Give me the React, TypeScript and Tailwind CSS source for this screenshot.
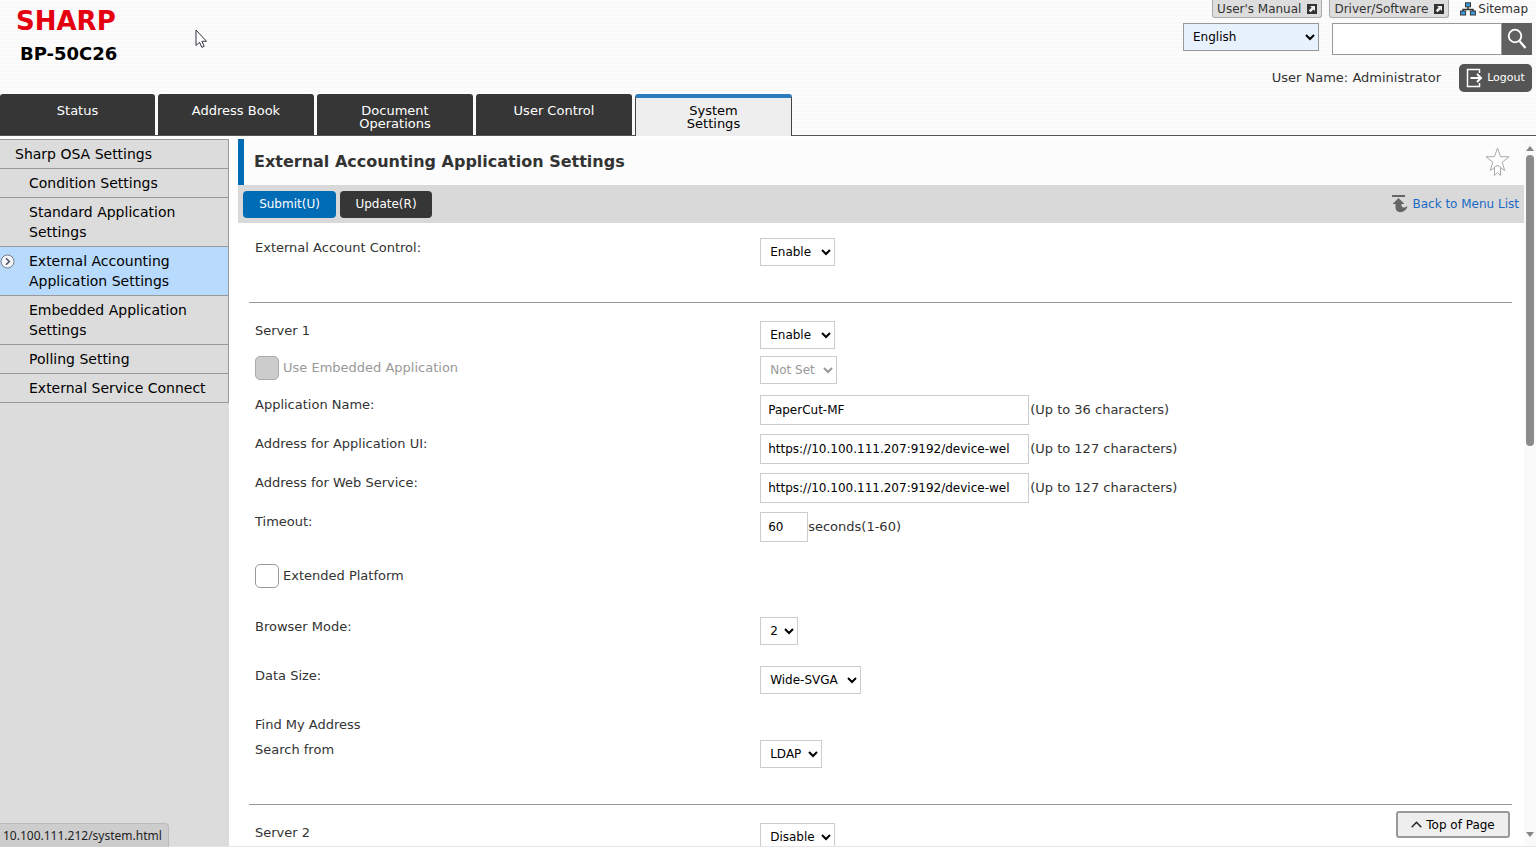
import type { ReactNode } from "react";

interface SelectProps {
  id: string;
  options: string[];
  label?: string;
  disabled?: boolean;
  className?: string;
}

interface RowProps {
  label: string;
  htmlFor?: string;
  className?: string;
  children?: ReactNode;
}

const tabs = ["Status", "Address Book", "Document Operations", "User Control", "System Settings"];

const menuItems = [
  "Condition Settings",
  "Standard Application Settings",
  "External Accounting Application Settings",
  "Embedded Application Settings",
  "Polling Setting",
  "External Service Connect",
];

const activeTab = "System Settings";
const activeItem = "External Accounting Application Settings";

function Select({ id, options, label, disabled, className = "border-[#ccc] bg-white" }: SelectProps) {
  return (
    <select
      id={id}
      aria-label={label}
      disabled={disabled}
      className={`h-7 border pl-[5px] text-xs text-black disabled:text-[#999] disabled:opacity-100 ${className}`}
    >
      {options.map((option) => (
        <option key={option}>{option}</option>
      ))}
    </select>
  );
}

function Row({ label, htmlFor, className = "", children }: RowProps) {
  return (
    <div className={`flex items-start ${className}`}>
      <div className="w-2/5 shrink-0 pl-1.5 leading-5">
        {htmlFor ? <label htmlFor={htmlFor}>{label}</label> : <span>{label}</span>}
      </div>
      <div className="flex items-center pl-1.5">{children}</div>
    </div>
  );
}

function TextField({ id, value, hint, className }: { id: string; value: string; hint: string; className: string }) {
  return (
    <>
      <input
        id={id}
        type="text"
        defaultValue={value}
        className={`h-[30px] border border-[#ccc] bg-white px-[7px] text-xs text-black ${className}`}
      />
      <span>{hint}</span>
    </>
  );
}

function ExternalIcon() {
  return (
    <svg width="10" height="10" viewBox="0 0 10 10" aria-hidden="true">
      <rect width="10" height="10" fill="#333" />
      <path d="M3 2h5v5L6.4 5.4 3.6 8.2 1.8 6.4 4.6 3.6z" fill="#eee" />
    </svg>
  );
}

function SitemapIcon() {
  return (
    <svg width="16" height="14" viewBox="0 0 16 14" aria-hidden="true">
      <path d="M8 5v3M3 10V7.500h10V10" fill="none" stroke="#333" strokeWidth="1.500" />
      <g fill="#3d9be0" stroke="#333">
        <rect x="5.500" y=".8" width="5" height="4" />
        <rect x=".6" y="9" width="5" height="4" />
        <rect x="10.400" y="9" width="5" height="4" />
      </g>
    </svg>
  );
}

function Header() {
  return (
    <header className="flex h-[94px] shrink-0 justify-between">
      <div className="pt-2 pl-4">
        <p className="text-[26px] leading-[26px] font-bold text-[#e5000f]">SHARP</p>
        <h1 className="pt-2 pl-1 text-lg leading-6 font-bold text-black">BP-50C26</h1>
      </div>
      <div className="flex flex-col items-end pr-1">
        <div className="flex h-[18px] items-stretch gap-[7px] pr-1 text-xs">
          {["User's Manual", "Driver/Software"].map((name) => (
            <button
              key={name}
              type="button"
              className="flex items-center gap-1.5 rounded-b-[3px] border border-t-0 border-[#aaa] bg-[#ddd] px-1"
            >
              {name}
              <ExternalIcon />
            </button>
          ))}
          <a href="#sitemap" className="flex items-center gap-0.5 pl-1">
            <SitemapIcon />
            Sitemap
          </a>
        </div>
        <div className="flex items-start gap-[13px] pt-[5px]">
          <Select
            id="language"
            label="Language"
            options={["English"]}
            className="w-[136px] border-[#999] bg-[#e8f1fe]"
          />
          <form className="flex h-8 w-[200px]">
            <input type="search" aria-label="Search" className="min-w-0 flex-1 border border-[#999] bg-white px-2 text-xs" />
            <button type="button" aria-label="Search" className="flex w-[30px] items-center justify-center bg-[#606060]">
              <svg width="20" height="22" viewBox="0 0 20 22" fill="none" stroke="#fff" aria-hidden="true">
                <circle cx="8" cy="8" r="6.300" strokeWidth="1.800" />
                <path d="M12.500 13l6 7" strokeWidth="2.200" />
              </svg>
            </button>
          </form>
        </div>
        <div className="flex items-center gap-[18px] pt-[9px]">
          <span>User Name: Administrator</span>
          <button
            type="button"
            className="flex h-[28px] w-[73px] items-center justify-center gap-1 rounded-[5px] bg-[#555] text-[11px] text-white"
          >
            <svg width="17" height="20" viewBox="0 0 17 20" fill="none" stroke="#fff" strokeWidth="1.500" aria-hidden="true">
              <path d="M13.500 5V1.500H1.500v17h12V15" />
              <path d="M4.500 10h10M11 6l4 4-4 4" strokeWidth="2" />
            </svg>
            Logout
          </button>
        </div>
      </div>
    </header>
  );
}

function Tabs() {
  return (
    <nav className="flex h-[42px] shrink-0 gap-[3px] border-b border-[#555]">
      {tabs.map((tab) => (
        <a
          key={tab}
          href="#tab"
          className={
            tab === activeTab
              ? "-mb-px flex w-[157px] justify-center rounded-t-[3px] border-x border-t-4 border-x-[#444] border-t-[#2b7bbd] bg-[#eee] px-8 pt-1.5 text-center leading-[13px] text-black"
              : "flex w-[156px] justify-center rounded-t-[3px] bg-[#363636] px-8 pt-2.5 text-center leading-[13px] whitespace-nowrap text-white first:w-[155px]"
          }
        >
          <span className={tab.length > 12 ? "w-20 whitespace-normal" : ""}>{tab}</span>
        </a>
      ))}
    </nav>
  );
}

function Sidebar() {
  return (
    <aside className="w-[229px] shrink-0 bg-[#dcdcdc] text-sm leading-5 text-black">
      <a href="#osa" className="block border-y border-r border-[#999] py-1 pl-[15px]">
        Sharp OSA Settings
      </a>
      <ul>
        {menuItems.map((item) => (
          <li key={item} className={`border-r border-b border-[#999] ${item === activeItem ? "bg-[#b8dafc]" : ""}`}>
            <a href="#item" className="flex items-start py-1">
              <span className="flex h-5 w-[29px] shrink-0 items-center">
                {item === activeItem && (
                  <svg width="15" height="15" viewBox="0 0 15 15" fill="none" aria-hidden="true">
                    <circle cx="7.500" cy="7.500" r="6.500" fill="#f4f8fc" stroke="#777b88" />
                    <path d="M6 4.300l3.300 3.200L6 10.700" stroke="#556" strokeWidth="1.600" />
                  </svg>
                )}
              </span>
              <span className="pr-5">{item}</span>
            </a>
          </li>
        ))}
      </ul>
    </aside>
  );
}

function SettingsForm() {
  return (
    <form className="mr-3 ml-[11px] pt-[15px]">
      <Row label="External Account Control:" htmlFor="account-control">
        <Select id="account-control" options={["Enable"]} className="w-[75px] border-[#ccc] bg-white" />
      </Row>
      <hr className="mt-9 mb-[18px] border-[#999]" />

      <Row label="Server 1" htmlFor="server-1">
        <Select id="server-1" options={["Enable"]} className="w-[75px] border-[#ccc] bg-white" />
      </Row>
      <div className="mt-[7px] flex items-start">
        <label className="flex w-2/5 shrink-0 items-center gap-1 pl-1.5 text-[#999]">
          <input type="checkbox" disabled className="size-6 appearance-none rounded-[5px] border border-[#aaa] bg-[#ccc]" />
          Use Embedded Application
        </label>
        <div className="pl-1.5">
          <Select
            id="embedded-app"
            label="Embedded application"
            options={["Not Set"]}
            disabled
            className="block w-[77px] border-[#ccc] bg-white"
          />
        </div>
      </div>
      <Row label="Application Name:" htmlFor="app-name" className="mt-[11px]">
        <TextField id="app-name" value="PaperCut-MF" hint="(Up to 36 characters)" className="mr-px w-[269px]" />
      </Row>
      <Row label="Address for Application UI:" htmlFor="app-ui" className="mt-[9px]">
        <TextField
          id="app-ui"
          value="https://10.100.111.207:9192/device-wel"
          hint="(Up to 127 characters)"
          className="mr-px w-[269px]"
        />
      </Row>
      <Row label="Address for Web Service:" htmlFor="web-service" className="mt-[9px]">
        <TextField
          id="web-service"
          value="https://10.100.111.207:9192/device-wel"
          hint="(Up to 127 characters)"
          className="mr-px w-[269px]"
        />
      </Row>
      <Row label="Timeout:" htmlFor="timeout" className="mt-[9px]">
        <TextField id="timeout" value="60" hint="seconds(1-60)" className="w-12" />
      </Row>
      <label className="mt-[22px] flex items-center gap-1 pl-1.5">
        <input type="checkbox" className="size-6 appearance-none rounded-[5px] border border-[#999] bg-white" />
        Extended Platform
      </label>
      <Row label="Browser Mode:" htmlFor="browser-mode" className="mt-[29px]">
        <Select id="browser-mode" options={["2"]} className="w-[38px] border-[#ccc] bg-white" />
      </Row>
      <Row label="Data Size:" htmlFor="data-size" className="mt-[21px]">
        <Select id="data-size" options={["Wide-SVGA"]} className="w-[101px] border-[#ccc] bg-white" />
      </Row>
      <Row label="Find My Address" className="mt-[21px]" />
      <Row label="Search from" htmlFor="search-from" className="mt-[5px]">
        <Select id="search-from" options={["LDAP"]} className="w-[62px] border-[#ccc] bg-white" />
      </Row>
      <hr className="mt-9 mb-[18px] border-[#999]" />

      <Row label="Server 2" htmlFor="server-2">
        <Select id="server-2" options={["Disable"]} className="w-[75px] border-[#ccc] bg-white" />
      </Row>
    </form>
  );
}

function Scrollbar() {
  return (
    <div className="flex w-3 shrink-0 flex-col items-center bg-[#fafafa] pt-[7px] pb-[9px]" aria-hidden="true">
      <svg width="8" height="5" viewBox="0 0 8 5">
        <path d="M4 0l4 5H0z" fill="#858585" />
      </svg>
      <div className="mt-1 w-2 flex-1">
        <div className="h-[43%] rounded-full bg-[#8b8b8b]" />
      </div>
      <svg width="8" height="5" viewBox="0 0 8 5">
        <path d="M0 0h8L4 5z" fill="#858585" />
      </svg>
    </div>
  );
}

export default function App() {
  return (
    <div className="relative flex h-screen flex-col overflow-hidden bg-[repeating-linear-gradient(#fcfcfc_0px,#fcfcfc_2px,#f9f9f9_2px,#f9f9f9_4px)] font-['DejaVu_Sans',Verdana,sans-serif] text-[13px] text-[#333]">
      <Header />
      <Tabs />
      <div className="flex min-h-0 flex-1 gap-[9px] border-b border-[#e5e5e5] bg-white pt-[3px]">
        <Sidebar />
        <div className="flex min-w-0 flex-1">
          <main className="min-w-0 flex-1 overflow-hidden">
            <div className="flex h-[46px] items-center justify-between border-l-[6px] border-[#006cb5] bg-[#fcfcfc] pr-[14px] pl-2.5">
              <h2 className="text-base font-bold">External Accounting Application Settings</h2>
              <button type="button" aria-label="Add to favorites">
                <svg width="25" height="30" viewBox="0 0 25 30" fill="#fff" stroke="#aaa" aria-hidden="true">
                  <path d="M12.500 1l3 8.700 8.500.1-6.800 5.400 2.500 8.300-7.200-5-7.200 5 2.500-8.300L1 9.800l8.500-.1z" />
                  <path d="M9.500 20v8.500l3-3 3 3V20l-3-1.500z" />
                </svg>
              </button>
            </div>
            <div className="flex h-[38px] items-center justify-between bg-[#d9d9d9] pr-[5px] pl-[5px]">
              <div className="flex gap-1 text-xs text-white">
                <button type="button" className="h-[27px] w-[93px] rounded-[4px] bg-[#006cb5]">
                  Submit(U)
                </button>
                <button type="button" className="h-[27px] w-[92px] rounded-[4px] bg-[#363636]">
                  Update(R)
                </button>
              </div>
              <a href="#menu" className="flex items-center gap-1 text-xs text-[#1a69c4]">
                <svg width="17" height="18" viewBox="0 0 17 18" fill="#666" aria-hidden="true">
                  <path d="M1 0h13v2H1z" />
                  <path d="M7.500 3l6 6h-3c-.2 3.500 1.500 5 6 2-1.500 7.500-12 8.500-12 1V9h-3z" />
                </svg>
                Back to Menu List
              </a>
            </div>
            <SettingsForm />
          </main>
          <Scrollbar />
        </div>
      </div>

      <button
        type="button"
        className="absolute right-[26px] bottom-[9px] flex h-[27px] w-[114px] items-center justify-center gap-1 rounded-[3px] border-2 border-[#999] bg-[#eee] text-xs text-black"
      >
        <svg width="11" height="7" viewBox="0 0 11 7" fill="none" stroke="#222" strokeWidth="1.500" aria-hidden="true">
          <path d="M.7 6.300l4.800-5 4.800 5" />
        </svg>
        Top of Page
      </button>
      <div className="absolute bottom-0 left-0 h-6 rounded-tr-[4px] border-t border-r border-[#bbb] bg-[#cdcdcd] pr-1.5 pl-[3px] font-['Noto_Sans',sans-serif] text-xs leading-6 text-[#222]">
        10.100.111.212/system.html
      </div>
      <svg className="absolute top-[29px] left-[195px]" width="13" height="20" viewBox="0 0 13 20" aria-hidden="true">
        <path d="M1 1v15.500l3.500-3.200 2.300 5 2.400-1-2.300-5h4.600z" fill="#fff" stroke="#334" />
      </svg>
    </div>
  );
}
